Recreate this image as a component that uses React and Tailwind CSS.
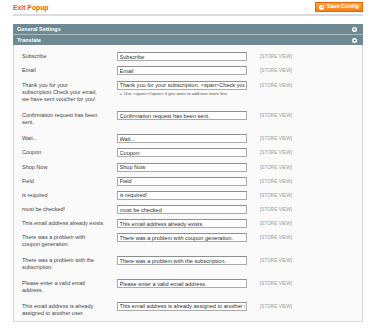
import React from "react";

const rows = [
  { label: "Subscribe", value: "Subscribe", size: "single" },
  { label: "Email", value: "Email", size: "single" },
  {
    label: "Thank you for your\nsubscription.Check your email,\nwe have sent voucher for you!",
    value: "Thank you for your subscription. <span>Check your email</span>",
    size: "thank",
    note: "Use <span></span> if you want to add one more line.",
  },
  { label: "Confirmation request has been\nsent.", value: "Confirmation request has been sent.", size: "double" },
  { label: "Wait...", value: "Wait...", size: "single" },
  { label: "Coupon", value: "Coupon:", size: "single" },
  { label: "Shop Now", value: "Shop Now", size: "single" },
  { label: "Field", value: "Field", size: "single" },
  { label: "is required", value: "is required!", size: "single" },
  { label: "must be checked!", value: "must be checked", size: "single" },
  { label: "This email address already exists", value: "This email address already exists", size: "single" },
  { label: "There was a problem with\ncoupon generation.", value: "There was a problem with coupon generation.", size: "double" },
  { label: "There was a problem with the\nsubscription.", value: "There was a problem with the subscription.", size: "double" },
  { label: "Please enter a valid email\naddress.", value: "Please enter a valid email address.", size: "double" },
  {
    label: "This email address is already\nassigned to another user.",
    value: "This email address is already assigned to another user.",
    size: "last",
  },
];

const heights = {
  single: "h-[14.2px]",
  double: "h-[22.8px]",
  thank: "h-[30.7px]",
  last: "h-[19px]",
};

const Toggle = ({ up }) => (
  <span className="flex h-[5px] w-[5px] items-center justify-center rounded-full bg-white">
    <svg width="3" height="3" viewBox="0 0 4 4">
      {up ? (
        <path d="M0 3 L2 0.6 L4 3 Z" fill="#4d5e64" />
      ) : (
        <path d="M0 1 L2 3.4 L4 1 Z" fill="#4d5e64" />
      )}
    </svg>
  </span>
);

const SectionHead = ({ title, up }) => (
  <div className="flex h-[10px] items-center justify-between bg-[#6f8992] pl-[4px] pr-[6px] text-[5.5px] font-bold text-white">
    <span>{title}</span>
    <Toggle up={up} />
  </div>
);

const App = () => {
  return (
    <div
      className="h-[328px] w-[374px] overflow-hidden bg-white pl-[13px] pr-[11px] pt-[2px]"
      style={{ fontFamily: '"Liberation Sans", Arial, sans-serif' }}
    >
      <div className="flex h-[12px] items-start justify-between">
        <h3 className="pt-[1.5px] text-[6.8px] font-bold leading-[8px] text-[#eb5e00]">
          Exit Popup
        </h3>
        <button className="flex h-[10px] w-[48px] items-center gap-[3px] border border-[#ed6502] bg-gradient-to-b from-[#ffac47] to-[#f77c16] pl-[3px] text-[5.5px] font-bold leading-none text-white">
          <span className="flex h-[5px] w-[5px] items-center justify-center rounded-full bg-white">
            <svg width="4" height="4" viewBox="0 0 4 4">
              <path d="M0.7 2 L1.7 3 L3.3 1" stroke="#f77c16" strokeWidth="0.8" fill="none" />
            </svg>
          </span>
          Save Config
        </button>
      </div>
      <div className="h-[2px] bg-[#dcdcdc]" />

      <div className="mt-[8px]">
        <SectionHead title="General Settings" />
        <div className="h-[1px] bg-[#a9bbc1]" />
        <SectionHead title="Translate" up />
        <div className="border border-t-0 border-[#d6d6d6] bg-[#fafafa] pl-[8px] pt-[7.3px] text-[5.5px] text-[#444]">
          {rows.map((r, i) => (
            <div key={i} className={`flex items-start ${heights[r.size]}`}>
              <label className="w-[95px] shrink-0 whitespace-pre-line pt-[1px] leading-[7px]">
                {r.label}
              </label>
              <div className="w-[130px] shrink-0">
                <input
                  readOnly
                  defaultValue={r.value}
                  className="block h-[9px] w-[130px] border border-[#aaa] border-t-[#8f8f8f] bg-white px-[1.5px] text-[5.6px] leading-none text-[#2f2f2f] outline-none"
                />
                {r.note && (
                  <p className="mt-[1px] flex items-center gap-[1.5px] pl-[2px] text-[4.4px] leading-[6px] text-[#555]">
                    <span className="text-[3.5px] text-[#999]">▲</span>
                    {r.note}
                  </p>
                )}
              </div>
              <span className="ml-[13px] pt-[2px] text-[4.7px] leading-[5px] text-[#9c9c9c]">
                [STORE VIEW]
              </span>
            </div>
          ))}
        </div>
      </div>
    </div>
  );
};

export default App;
